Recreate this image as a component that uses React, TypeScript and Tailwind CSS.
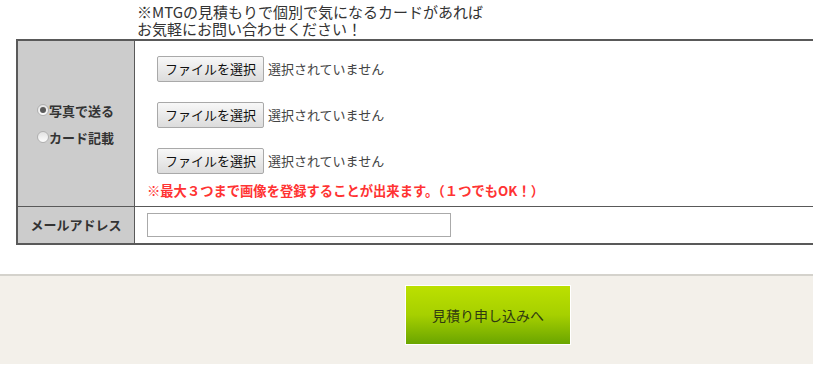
const font = { fontFamily: '"Noto Sans CJK JP", "Noto Sans", sans-serif' };

const FileRow = () => (
  <div className="flex items-center h-[26px]">
    <div className="h-[26px] w-[107px] flex items-center justify-center border border-[#a9a9a9] rounded-[2px] bg-gradient-to-b from-[#f8f8f8] to-[#dcdcdc] text-[13px] text-[#111]">
      ファイルを選択
    </div>
    <span className="ml-[4px] text-[13px] text-[#444]">選択されていません</span>
  </div>
);

const Radio = ({ checked, label }: { checked?: boolean; label: string }) => (
  <div className="flex items-center h-[19px]">
    <span className="w-[12px] h-[12px] rounded-full border border-[#b0b0b0] bg-gradient-to-b from-[#e2e2e2] to-[#fdfdfd] flex items-center justify-center">
      {checked && <span className="w-[6px] h-[6px] rounded-full bg-[#5a5a5a]" />}
    </span>
    <span className="text-[13px] leading-[19px] font-bold text-[#333]">{label}</span>
  </div>
);

export default function App() {
  return (
    <div className="w-[813px] h-[365px] overflow-hidden bg-white" style={font}>
      <div className="pl-[137px] pt-[3px] text-[15px] leading-[17px] text-[#333]">
        <p>※MTGの見積もりで個別で気になるカードがあれば</p>
        <p>お気軽にお問い合わせください！</p>
      </div>
      <div className="ml-[16px] mt-[2px] w-[820px] border-l-2 border-y-2 border-[#595959]">
        <div className="flex h-[166px] border-b border-[#595959]">
          <div className="w-[117px] bg-[#cccccc] border-r border-[#595959] flex flex-col justify-center pl-[19px] gap-[8px]">
            <Radio checked label="写真で送る" />
            <Radio label="カード記載" />
          </div>
          <div className="flex-1 pt-[15px] pl-[22px] flex flex-col gap-[20px]">
            <FileRow />
            <FileRow />
            <FileRow />
            <p className="-mt-[13px] -ml-[10px] text-[13.3px] font-bold text-[#ff3333]">
              ※最大３つまで画像を登録することが出来ます。（１つでもOK！）
            </p>
          </div>
        </div>
        <div className="flex h-[36px]">
          <div className="w-[117px] bg-[#cccccc] border-r border-[#595959] flex items-center justify-center text-[13px] font-bold text-[#333]">
            メールアドレス
          </div>
          <div className="flex-1 flex items-center pl-[12px]">
            <div className="w-[304px] h-[24px] border border-[#aaaaaa] bg-white" />
          </div>
        </div>
      </div>
      <div className="h-[29px]" />
      <div className="h-[90px] bg-[#f3f0ea] border-t-2 border-[#d4d2cc] pt-[9px]">
        <div className="ml-[405px] w-[166px] h-[60px] bg-white p-[1px]">
          <div className="w-full h-full bg-gradient-to-b from-[#bce000] via-[#a6d000] to-[#6aa500] flex items-center justify-center text-[14px] text-[#2f3a10]">
            見積り申し込みへ
          </div>
        </div>
      </div>
    </div>
  );
}
